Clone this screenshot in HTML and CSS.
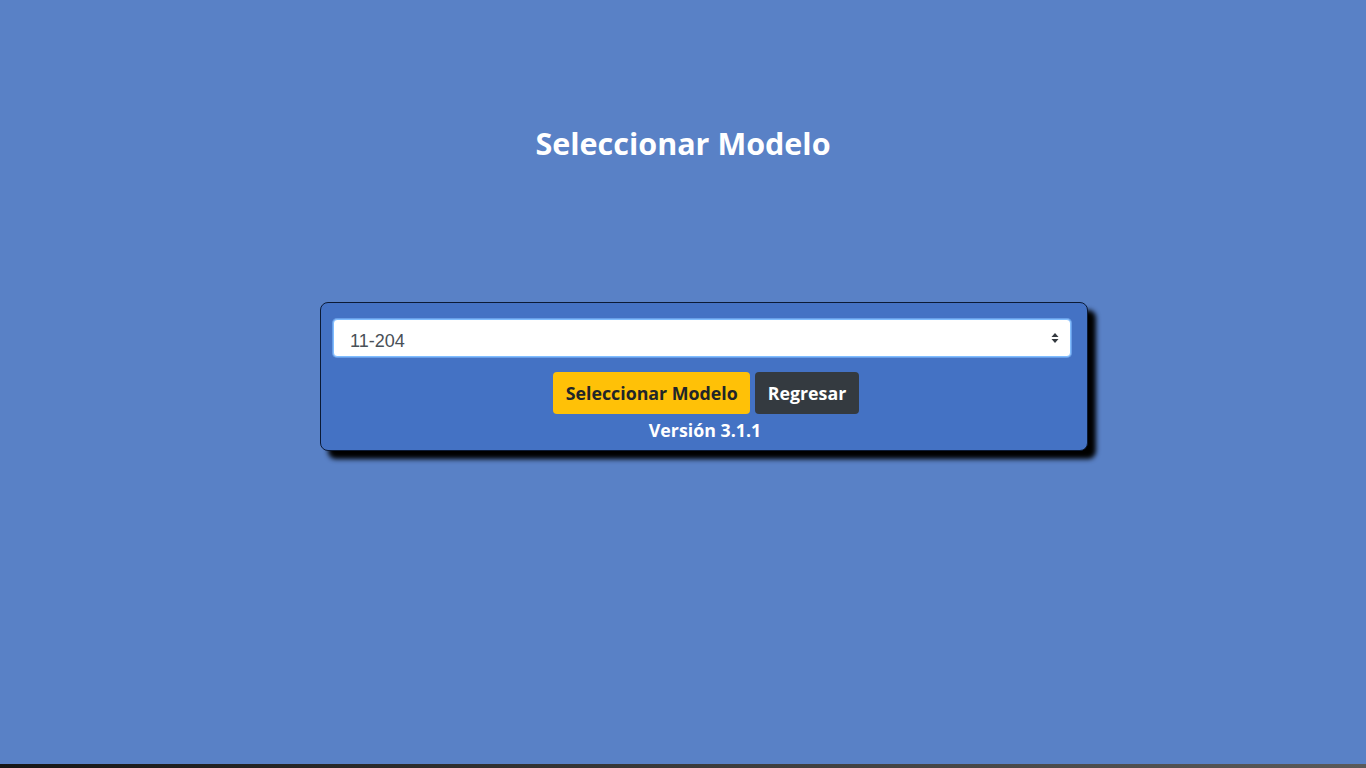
FILE: index.html
```html
<!DOCTYPE html>
<html lang="es">
<head>
<meta charset="utf-8">
<title>Seleccionar Modelo</title>
<link rel="stylesheet" href="styles.css">
</head>
<body>
<div class="page">
  <h1 class="title">Seleccionar Modelo</h1>
  <div class="card">
    <div class="select-wrap">
      <select class="select">
        <option>11-204</option>
      </select>
      <svg class="arrows" width="8" height="12" viewBox="0 0 8 12"><path d="M4 1 L7.5 5 H0.5 Z M4 11 L7.5 7 H0.5 Z" fill="#343a40"/></svg>
    </div>
    <div class="actions">
      <button class="btn btn-yellow">Seleccionar Modelo</button>
      <button class="btn btn-dark">Regresar</button>
    </div>
    <div class="version">Versión 3.1.1</div>
  </div>
</div>
<div class="bottombar"></div>
</body>
</html>
```

FILE: styles.css
```css
html, body {
  margin: 0;
  padding: 0;
  height: 100%;
}
body {
  background: #5981c6;
  font-family: "Open Sans", "Noto Sans", "Liberation Sans", sans-serif;
  display: flex;
  flex-direction: column;
  overflow: hidden;
}
.page {
  flex: 1;
  display: flex;
  flex-direction: column;
}
.title {
  margin: 123px 0 0;
  text-align: center;
  color: #ffffff;
  font-size: 30.5px;
  font-weight: 700;
  line-height: 40px;
}
.card {
  margin: 139px 0 0 320px;
  box-sizing: border-box;
  width: 768px;
  height: 149px;
  background: #4472c4;
  border: 1px solid #0b1a36;
  border-radius: 8px;
  box-shadow: 8px 8px 5px #000000;
  padding: 16px 16px 0 12px;
  display: flex;
  flex-direction: column;
  align-items: stretch;
}
.select-wrap {
  position: relative;
}
.select {
  appearance: none;
  -webkit-appearance: none;
  width: 100%;
  height: 38px;
  box-sizing: border-box;
  border: 1px solid #80bdff;
  border-radius: 4px;
  background: #ffffff;
  box-shadow: 0 0 0 1px rgba(128, 189, 255, 0.6);
  padding: 5px 30px 0 16px;
  font-family: "Liberation Sans", Arial, sans-serif;
  font-size: 18px;
  color: #495057;
  outline: none;
}
.arrows {
  position: absolute;
  right: 12px;
  top: 13px;
}
.actions {
  display: flex;
  justify-content: center;
  gap: 5px;
  margin-top: 15px;
  padding-left: 8px;
}
.btn {
  height: 42px;
  border: none;
  border-radius: 4px;
  padding: 0 12.5px;
  font-family: "Open Sans", "Noto Sans", sans-serif;
  font-weight: 700;
  font-size: 17.8px;
}
.btn-yellow {
  background: #ffc107;
  color: #212529;
}
.btn-dark {
  background: #343a40;
  color: #ffffff;
}
.version {
  text-align: center;
  color: #ffffff;
  font-weight: 700;
  font-size: 17.8px;
  line-height: 22px;
  margin-top: 5px;
  padding-left: 6px;
}
.bottombar {
  height: 4px;
  flex: none;
  background: linear-gradient(to right, #161616, #3a3a3a 50%, #5a5a5a);
}
```
